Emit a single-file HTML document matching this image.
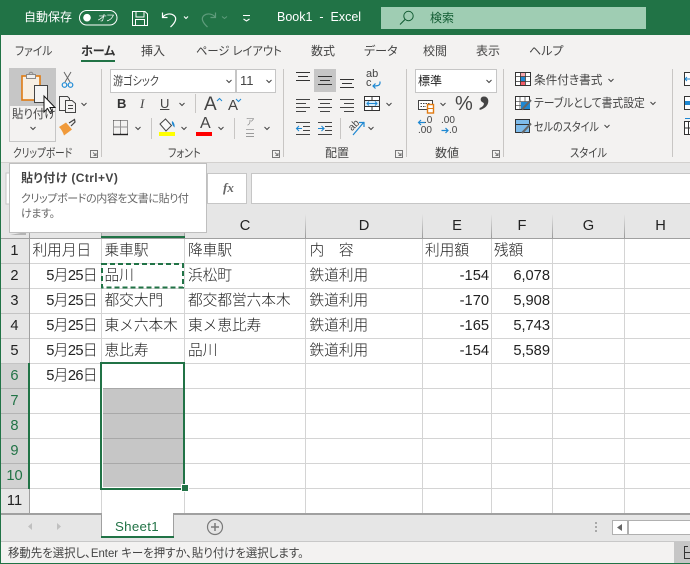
<!DOCTYPE html>
<html lang="ja"><head><meta charset="utf-8"><title>Book1 - Excel</title>
<style>
html,body{margin:0;padding:0;width:690px;height:564px;overflow:hidden;background:#fff}
body{position:relative;font-family:"Liberation Sans","Noto Sans CJK JP",sans-serif;color:#444}
svg{position:absolute;left:0;top:0}
.t{position:absolute;white-space:nowrap;font-size:12px;line-height:16px;font-feature-settings:"palt";color:#444;transform-origin:0 50%}
.w{color:#fff}
.c{position:absolute;white-space:nowrap;font-size:14.67px;line-height:25px;height:25px;color:#222;font-family:"Liberation Sans","Noto Sans CJK JP",sans-serif;font-weight:300}
.r{text-align:right}
.m{text-align:center}
.d{letter-spacing:-.6px}
#tip{position:absolute;left:9px;top:163px;width:196px;height:68px;background:#fff;border:1px solid #bfbfbf}
</style></head><body>
<svg width="690" height="564" viewBox="0 0 690 564" fill="none">
<defs><linearGradient id="g" gradientUnits="userSpaceOnUse" x1="0" y1="214" x2="0" y2="238"><stop offset="0" stop-color="#e6e6e6"/><stop offset="1" stop-color="#9a9a9a"/></linearGradient></defs>
<!-- backgrounds -->
<rect x="0" y="0" width="690" height="35" fill="#217346"/>
<rect x="0" y="35" width="690" height="127" fill="#f3f2f1"/>
<rect x="0" y="162" width="690" height="1" fill="#d2d0ce"/>
<rect x="0" y="163" width="690" height="75" fill="#e6e6e6"/>
<rect x="207.500" y="173.500" width="39" height="30" fill="#fff" stroke="#c6c6c6"/>
<rect x="251.500" y="173.500" width="440" height="30" fill="#fff" stroke="#c6c6c6"/>
<rect x="6" y="173" width="4" height="31" fill="#fff" stroke="#c6c6c6"/>
<!-- header cols -->
<rect x="101" y="214" width="84" height="24" fill="#d2d2d2"/>
<path d="M10 235L26 235L26 232Z" fill="#b4b4b4"/>
<path d="M29.500 214V238M101.500 214V238M184.500 214V238M305.500 214V238M422.500 214V238M491.500 214V238M552.500 214V238M624.500 214V238" stroke="url(#g)"/>
<rect x="0" y="238" width="690" height="1" fill="#a0a0a0"/>
<rect x="101" y="236" width="84" height="2" fill="#217346"/>
<!-- row header -->
<rect x="0" y="239" width="29" height="275" fill="#e6e6e6"/>
<rect x="0" y="364" width="29" height="125" fill="#d2d2d2"/>
<path d="M0 263.500H29M0 288.500H29M0 313.500H29M0 338.500H29M0 363.500H29" stroke="#c4c4c4"/>
<path d="M0 388.500H29M0 413.500H29M0 438.500H29M0 463.500H29M0 488.500H29" stroke="#b4b4b4"/>
<rect x="29" y="239" width="1" height="275" fill="#a0a0a0"/>
<rect x="28" y="363" width="2" height="126" fill="#217346"/>
<!-- grid -->
<path d="M30 263.500H690M30 288.500H690M30 313.500H690M30 338.500H690M30 363.500H690M30 388.500H690M30 413.500H690M30 438.500H690M30 463.500H690M30 488.500H690" stroke="#d4d4d4"/>
<path d="M101.500 239V513M184.500 239V513M305.500 239V513M422.500 239V513M491.500 239V513M552.500 239V513M624.500 239V513" stroke="#d4d4d4"/>
<!-- selection -->
<rect x="101" y="363" width="84" height="126" fill="#fff"/>
<rect x="103" y="388" width="80" height="99" fill="#c6c6c6"/>
<path d="M103 388.500H183M103 413.500H183M103 438.500H183M103 463.500H183" stroke="#a8a8a8"/>
<rect x="101" y="363" width="83" height="126" stroke="#217346" stroke-width="2"/>
<rect x="181" y="484" width="8" height="8" fill="#fff"/>
<rect x="182" y="485" width="6" height="6" fill="#217346"/>
<!-- dashed -->
<rect x="102" y="264" width="81" height="23.500" stroke="#217346" stroke-width="2" stroke-dasharray="5 3"/>
<!-- tab bar / status -->
<rect x="0" y="513" width="690" height="2" fill="#a0a0a0"/>
<rect x="0" y="515" width="690" height="26" fill="#e6e6e6"/>
<rect x="0" y="541" width="690" height="1" fill="#c8c8c8"/>
<rect x="0" y="542" width="690" height="21" fill="#f3f2f1"/>
<rect x="0" y="563" width="690" height="1" fill="#217346"/>
<rect x="0" y="35" width="1" height="529" fill="#217346"/>
<rect x="674" y="542" width="16" height="21" fill="#c6c6c6"/>
<path d="M688 546.500H684.500V558.500H690M684.500 552.500H690" stroke="#333"/>
<rect x="101" y="513" width="73" height="25" fill="#a0a0a0"/>
<rect x="102" y="513" width="71" height="23" fill="#fff"/>
<rect x="101" y="536" width="73" height="2" fill="#217346"/>
<path d="M32 523V530L28 526.500ZM57 523V530L61 526.500Z" fill="#c0c0c0"/>
<circle cx="215" cy="527" r="7.500" stroke="#7a7a7a" stroke-width="1.200"/>
<path d="M215 523V531M211 527H219" stroke="#7a7a7a" stroke-width="1.500"/>
<path d="M595 522h2v2h-2zM595 526h2v2h-2zM595 530h2v2h-2z" fill="#a8a8a8"/>
<rect x="612.500" y="520.500" width="80" height="14" fill="#fff" stroke="#b0b0b0"/>
<rect x="627" y="521" width="2" height="13" fill="#b0b0b0"/>
<path d="M622 524V531L617 527.500Z" fill="#666"/>

<!-- title bar icons -->
<rect x="79.500" y="10.500" width="37.500" height="14.500" rx="7.200" stroke="#fff"/>
<circle cx="87" cy="17.700" r="3.800" fill="#fff"/>
<path d="M132.500 11.500H145L147.500 14V25.500H132.500ZM136 11.500V17H144V11.500M135.500 25.500V19.500H144.500V25.500" stroke="#fff"/>
<path d="M162.500 12.500V17.500H167.500M162.500 17.500C165 13.500 171 13 174 15.500C177 18 176 22 170.500 27" stroke="#fff" stroke-width="1.200"/>
<path d="M215.500 12.500V17.500H210.500M215.500 17.500C213 13.500 207 13 204 15.500C201 18 202 22 207.500 27" stroke="#5f9c7c" stroke-width="1.200"/>
<path d="M184 16.500L186 18.500L188 16.500M243.500 19L246.500 21L249.500 19" stroke="#fff" stroke-width="1.100"/>
<path d="M222 16.500L224.500 18.500L227 16.500" stroke="#5f9c7c"/>
<rect x="243" y="15" width="7" height="1" fill="#fff"/>
<rect x="381" y="7" width="265" height="22" fill="#9fcdb3"/>
<circle cx="408.500" cy="16" r="4.700" stroke="#125c33"/>
<path d="M405 19.500L400 24.500" stroke="#125c33" stroke-width="1.100"/>
<rect x="81" y="60" width="34" height="2" fill="#217346"/>

<!-- clipboard group -->
<rect x="9" y="68" width="47" height="37" fill="#c6c6c6"/>
<rect x="9.500" y="105.500" width="46" height="36" stroke="#c6c6c6"/>
<rect x="22" y="76" width="18" height="24" fill="#f7efe3" stroke="#e07b12" stroke-width="1.600"/>
<rect x="26.500" y="74.500" width="9" height="4" fill="#f0f0f0" stroke="#8a8a8a"/>
<path d="M29 74.500C29 71.500 33 71.500 33 74.500" stroke="#8a8a8a"/>
<rect x="34.500" y="85.500" width="13" height="17" fill="#f4f4f4" stroke="#444"/>
<path d="M44 96V112L47.500 108.500L50.500 113.500L52.500 112.500L50 107.500H55Z" fill="#fff" stroke="#111" stroke-width="1"/>
<path d="M64 72L70 82M71 72L65 82" stroke="#666"/>
<circle cx="64.500" cy="85" r="2.300" stroke="#1e8bd6" stroke-width="1.200"/>
<circle cx="70.500" cy="85" r="2.300" stroke="#1e8bd6" stroke-width="1.200"/>
<path d="M65 110.500H59.500V96.500H67.500L69.500 98.500V100.500" stroke="#444"/>
<path d="M65.500 100.500H72L75.500 103.500V112.500H65.500ZM68 105.500H73M68 108.500H73" stroke="#444"/>
<path d="M59 127L66 122.500L72 129.500L64 135.500C63 132 61 129 59 127Z" fill="#f09a3a"/>
<path d="M69 123L74.500 119.500L75 122L71 126" stroke="#444" stroke-width="1.200"/>
<path d="M101.500 69V157M283.500 69V157M406.500 69V157M503.500 69V157M672.500 69V157" stroke="#c8c6c4"/>
<path d="M90.500 150.500H97.500V157.500H90.500ZM93 152.500L96 155.500M96 153V155.500H93.500M272.500 150.500H279.500V157.500H272.500ZM275 152.500L278 155.500M278 153V155.500H275.500M395.500 150.500H402.500V157.500H395.500ZM398 152.500L401 155.500M401 153V155.500H398.500M492.500 150.500H499.500V157.500H492.500ZM495 152.500L498 155.500M498 153V155.500H495.500" stroke="#777"/>

<!-- font group -->
<rect x="110.500" y="69.500" width="125" height="23" fill="#fff" stroke="#c6c6c6"/>
<rect x="236.500" y="69.500" width="39" height="23" fill="#fff" stroke="#c6c6c6"/>
<path d="M195.500 94V113M151.500 118V139M234.500 118V139M340.500 118V139" stroke="#c8c6c4"/>
<path d="M113.500 120.500H127.500V133.500M113.500 120.500V133.500M120.500 120.500V133.500M113.500 127H127.500" stroke="#333" stroke-dasharray="1 1"/>
<path d="M113 134.500H128" stroke="#222" stroke-width="1.400"/>
<path d="M160 124L165.500 119L171.500 125.500L166 131Z" stroke="#444" fill="#f8f8f8"/>
<path d="M172 121C174 122 175 125 174.500 127.500C172.500 125.500 171.500 123.500 172 121Z" fill="#1e88d2"/>
<rect x="159" y="132" width="16" height="4" fill="#ffff00"/>
<rect x="196" y="132" width="16" height="4" fill="#ff0000"/>
<path d="M217 101L219.500 98.500L222 101" stroke="#1e88d2"/>
<path d="M236 99L238.500 101.500L241 99" stroke="#1e88d2"/>
<path d="M246 136.500H254M246 133.500H254" stroke="#9a9a9a"/>
<path d="M246 129.500H254" stroke="#b0b0b0"/>

<!-- alignment group -->
<rect x="314" y="69" width="22" height="23" fill="#c6c6c6"/>
<path d="M296 72.500H310M298 76.500H308M296 80.500H310M318 76.500H332M320 80.500H330M318 84.500H332M340 79.500H354M342 83.500H352M340 87.500H354" stroke="#333"/>
<path d="M296 99.500H310M296 103.500H306M296 107.500H310M296 111.500H306M318 99.500H332M320 103.500H330M318 107.500H332M320 111.500H330M340 99.500H354M344 103.500H354M340 107.500H354M344 111.500H354" stroke="#444"/>
<path d="M380 81.500V83C380 86 376 86 373 86M375.500 83.500L373 86L375.500 88.500" stroke="#1e88d2" stroke-width="1.200"/>
<rect x="364.500" y="96.500" width="15" height="14" fill="#fff" stroke="#333"/>
<rect x="365" y="100" width="14" height="7" fill="#d6ebf9"/>
<path d="M365 100.500H379M365 106.500H379M372 97V100M372 107V110" stroke="#333"/>
<path d="M367 103.500H377M369 101.500L367 103.500L369 105.500M375 101.500L377 103.500L375 105.500" stroke="#1e88d2"/>
<path d="M296 122.500H310M303 126.500H310M303 130.500H310M296 134.500H310M318 122.500H332M325 126.500H332M325 130.500H332M318 134.500H332" stroke="#444"/>
<path d="M302 128.500H296.500M299 126L296.500 128.500L299 131M318 128.500H324M321.500 126L324 128.500L321.500 131" stroke="#1e88d2" stroke-width="1.100"/>
<path d="M353 135L364 122M359 122.500H364V127" stroke="#1e88d2" stroke-width="1.200"/>

<!-- number group -->
<rect x="415.500" y="69.500" width="81" height="23" fill="#fff" stroke="#c6c6c6"/>
<rect x="418.500" y="100.500" width="14" height="9" stroke="#444" fill="#fff"/>
<path d="M420.500 103.500H430.500M420.500 106.500H426" stroke="#444" stroke-dasharray="1.500 1"/>
<rect x="427.500" y="104.500" width="6" height="8.500" fill="#fff" stroke="#e07b12" stroke-width="1.400"/>
<path d="M428 108.500H433" stroke="#e07b12"/>
<path d="M425 122.500H418.500M421 120L418.500 122.500L421 125M441.500 130.500H448M445.500 128L448 130.500L445.500 133" stroke="#1e88d2" stroke-width="1.200"/>

<!-- style group -->
<rect x="515.500" y="72.500" width="15" height="13" fill="#fff" stroke="#333"/>
<rect x="520" y="73" width="5" height="4" fill="#f7a6ad"/><rect x="520" y="81" width="5" height="4" fill="#f15a67"/>
<rect x="520" y="77" width="5" height="4" fill="#1e88d2"/>
<path d="M520.500 73V85M525.500 73V85M516 76.500H530M516 81.500H530" stroke="#333" stroke-width=".8"/>
<rect x="515.500" y="96.500" width="14" height="13" fill="#fff" stroke="#333"/>
<path d="M520 97V109M525 97V109M516 101.500H529M516 105.500H529" stroke="#555" stroke-width=".8"/>
<rect x="521" y="102" width="9" height="7" fill="#1e88d2"/>
<path d="M522 109.500L531 100" stroke="#666" stroke-width="2"/>
<rect x="515.500" y="119.500" width="14" height="13" fill="#fff" stroke="#333"/>
<rect x="516" y="120" width="13" height="12" fill="#7ebbea"/>
<path d="M522 133L531 123.500" stroke="#666" stroke-width="2"/>
<path d="M516 124.500H529" stroke="#333"/>
<!-- far right -->
<rect x="684.500" y="72.500" width="8" height="13" fill="#fff" stroke="#333"/>
<path d="M690 79H685M687 77L685 79L687 81" stroke="#1e88d2"/>
<rect x="684.500" y="96.500" width="8" height="13" fill="#fff" stroke="#333"/>
<rect x="685" y="101" width="7" height="4" fill="#1e88d2"/>
<rect x="684.500" y="121.500" width="8" height="13" fill="#fff" stroke="#333"/>
<path d="M685 118.500H690" stroke="#1e88d2"/><path d="M685 128H692M688.500 122V134" stroke="#333"/>

<!-- chevrons -->
<path d="M30.500 127L33 129.500L35.500 127M81.500 103L84 105.500L86.500 103M226.500 80L229 82.500L231.500 80M266.500 80L269 82.500L271.500 80M179.500 103L182 105.500L184.500 103M135.500 127L138 129.500L140.500 127M181.500 127L184 129.500L186.500 127M218.500 127L221 129.500L223.500 127M264.500 127L267 129.500L269.500 127M386.500 103L389 105.500L391.500 103M368.500 127L371 129.500L373.500 127M486.500 80L489 82.500L491.500 80M440.500 103L443 105.500L445.500 103M608.500 79L611 81.500L613.500 79M650.500 102L653 104.500L655.500 102M604.500 125L607 127.500L609.500 125" stroke="#444"/>
</svg>

<!-- title bar text -->
<div class="t w" style="left:24px;top:9px">自動保存</div>
<div class="t w" style="left:97px;top:11px;font-size:9px;line-height:14px;font-style:italic">オフ</div>
<div class="t w" style="left:277px;top:9px;white-space:pre;font-size:12.500px">Book1  -  Excel</div>
<div class="t" style="left:430px;top:10px;color:#125c33">検索</div>

<!-- tabs -->
<div class="t" style="left:15px;top:43px;transform:scaleX(.9)">ファイル</div>
<div class="t" style="left:81px;top:43px;font-weight:700;color:#333">ホーム</div>
<div class="t" style="left:141px;top:43px">挿入</div>
<div class="t" style="left:196px;top:43px;transform:scaleX(.94)">ページ レイアウト</div>
<div class="t" style="left:311px;top:43px">数式</div>
<div class="t" style="left:364px;top:43px">データ</div>
<div class="t" style="left:423px;top:43px">校閲</div>
<div class="t" style="left:476px;top:43px">表示</div>
<div class="t" style="left:529px;top:43px">ヘルプ</div>

<!-- ribbon text -->
<div class="t" style="left:12px;top:106px;transform:scaleX(.95)">貼り付け</div>
<div class="t" style="left:13px;top:145px;transform:scaleX(.8)">クリップボード</div>
<div class="t" style="left:113px;top:73px;transform:scaleX(.84)">游ゴシック</div>
<div class="t" style="left:240px;top:73px;font-size:13px">11</div>
<div class="t" style="left:117px;top:96px;font-weight:700;font-size:13px;color:#333">B</div>
<div class="t" style="left:140px;top:96px;font-style:italic;font-size:13px;font-family:'Liberation Serif',serif">I</div>
<div class="t" style="left:160px;top:96px;font-size:13px;text-decoration:underline">U</div>
<div class="t" style="left:204px;top:95px;font-size:19px;line-height:20px">A</div>
<div class="t" style="left:228px;top:97px;font-size:15px;line-height:18px">A</div>
<div class="t" style="left:200px;top:115px;font-size:16px;line-height:18px">A</div>
<div class="t" style="left:246px;top:116px;font-size:9px;line-height:12px;color:#8a8a8a">ア</div>
<div class="t" style="left:168px;top:145px;transform:scaleX(.83)">フォント</div>
<div class="t" style="left:366px;top:68px;font-size:11px;line-height:12px">ab</div>
<div class="t" style="left:366px;top:77px;font-size:11px;line-height:12px">c</div>
<div class="t" style="left:349px;top:120px;font-size:10px;line-height:12px;transform:rotate(-45deg);transform-origin:50% 50%">ab</div>
<div class="t" style="left:325px;top:145px">配置</div>
<div class="t" style="left:418px;top:73px;color:#222">標準</div>
<div class="t" style="left:455px;top:93px;font-size:20px;line-height:22px">%</div>
<div class="t" style="left:479px;top:67px;font-size:44px;line-height:44px;font-weight:700;font-family:'Liberation Serif',serif">,</div>
<div class="t" style="left:424px;top:115px;font-size:10px;line-height:11px">.0</div>
<div class="t" style="left:418px;top:125px;font-size:10px;line-height:11px">.00</div>
<div class="t" style="left:441px;top:115px;font-size:10px;line-height:11px">.00</div>
<div class="t" style="left:449px;top:125px;font-size:10px;line-height:11px">.0</div>
<div class="t" style="left:435px;top:145px">数値</div>
<div class="t" style="left:534px;top:72px;transform:scaleX(.97)">条件付き書式</div>
<div class="t" style="left:534px;top:95px;transform:scaleX(.9)">テーブルとして書式設定</div>
<div class="t" style="left:534px;top:119px;transform:scaleX(.84)">セルのスタイル</div>
<div class="t" style="left:570px;top:145px;transform:scaleX(.86)">スタイル</div>
<div class="t" style="left:223px;top:180px;font-family:'Liberation Serif',serif;font-style:italic;font-weight:700;color:#666;font-size:13px">fx</div>

<!-- column headers -->
<div class="c m" style="left:185px;width:120px;top:214px">C</div>
<div class="c m" style="left:306px;width:116px;top:214px">D</div>
<div class="c m" style="left:423px;width:68px;top:214px">E</div>
<div class="c m" style="left:492px;width:60px;top:214px">F</div>
<div class="c m" style="left:553px;width:71px;top:214px">G</div>
<div class="c m" style="left:625px;width:71px;top:214px">H</div>

<!-- row headers -->
<div class="c m" style="left:0;width:29px;top:239px">1</div>
<div class="c m" style="left:0;width:29px;top:264px">2</div>
<div class="c m" style="left:0;width:29px;top:289px">3</div>
<div class="c m" style="left:0;width:29px;top:314px">4</div>
<div class="c m" style="left:0;width:29px;top:339px">5</div>
<div class="c m" style="left:0;width:29px;top:364px;color:#217346">6</div>
<div class="c m" style="left:0;width:29px;top:389px;color:#217346">7</div>
<div class="c m" style="left:0;width:29px;top:414px;color:#217346">8</div>
<div class="c m" style="left:0;width:29px;top:439px;color:#217346">9</div>
<div class="c m" style="left:0;width:29px;top:464px;color:#217346">10</div>
<div class="c m" style="left:0;width:29px;top:489px">11</div>

<!-- cells -->
<div class="c" style="left:32.500px;top:239px">利用月日</div>
<div class="c" style="left:104.500px;top:239px">乗車駅</div>
<div class="c" style="left:188px;top:239px">降車駅</div>
<div class="c" style="left:309.500px;top:239px">内　容</div>
<div class="c" style="left:425px;top:239px">利用額</div>
<div class="c" style="left:494px;top:239px">残額</div>

<div class="c r d" style="right:593px;top:264px">5月25日</div>
<div class="c" style="left:104.500px;top:264px">品川</div>
<div class="c" style="left:188px;top:264px">浜松町</div>
<div class="c" style="left:309.500px;top:264px">鉄道利用</div>
<div class="c r" style="right:201px;top:264px">-154</div>
<div class="c r" style="right:140px;top:264px">6,078</div>

<div class="c r d" style="right:593px;top:289px">5月25日</div>
<div class="c" style="left:104.500px;top:289px">都交大門</div>
<div class="c" style="left:188px;top:289px">都交都営六本木</div>
<div class="c" style="left:309.500px;top:289px">鉄道利用</div>
<div class="c r" style="right:201px;top:289px">-170</div>
<div class="c r" style="right:140px;top:289px">5,908</div>

<div class="c r d" style="right:593px;top:314px">5月25日</div>
<div class="c" style="left:104.500px;top:314px">東メ六本木</div>
<div class="c" style="left:188px;top:314px">東メ恵比寿</div>
<div class="c" style="left:309.500px;top:314px">鉄道利用</div>
<div class="c r" style="right:201px;top:314px">-165</div>
<div class="c r" style="right:140px;top:314px">5,743</div>

<div class="c r d" style="right:593px;top:339px">5月25日</div>
<div class="c" style="left:104.500px;top:339px">恵比寿</div>
<div class="c" style="left:188px;top:339px">品川</div>
<div class="c" style="left:309.500px;top:339px">鉄道利用</div>
<div class="c r" style="right:201px;top:339px">-154</div>
<div class="c r" style="right:140px;top:339px">5,589</div>

<div class="c r d" style="right:593px;top:364px">5月26日</div>

<!-- tab + status -->
<div class="t" style="left:115px;top:519px;font-size:13.300px;color:#217346;letter-spacing:.3px">Sheet1</div>
<div class="t" style="left:8px;top:545px;color:#444;transform:scaleX(.95)">移動先を選択し、Enter キーを押すか、貼り付けを選択します。</div>

<!-- tooltip -->
<div id="tip"></div>
<div class="t" style="left:21px;top:170px;font-weight:700;color:#444;letter-spacing:.4px">貼り付け (Ctrl+V)</div>
<div class="t" style="left:21px;top:191px;color:#666;font-size:11px;letter-spacing:-.4px">クリップボードの内容を文書に貼り付</div>
<div class="t" style="left:21px;top:206px;color:#666;font-size:11px;letter-spacing:-.4px">けます。</div>
</body></html>
